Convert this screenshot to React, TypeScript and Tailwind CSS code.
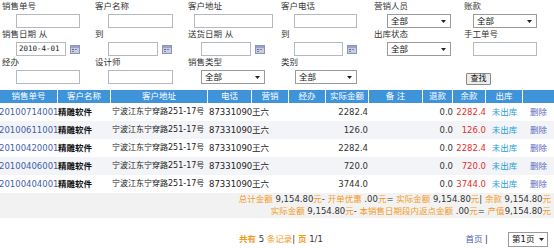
import React from "react";

const font = "font-['DejaVu_Sans','Noto_Sans_CJK_SC',sans-serif]";

const CalendarIcon = () => (
  <svg width="10" height="9" viewBox="0 0 10 9" className="ml-[4px]">
    <rect x="0.5" y="0.5" width="9" height="8" fill="#c9cde2" stroke="#8e94b4" />
    <rect x="1" y="1" width="8" height="2" fill="#9aa2c6" />
    <rect x="2" y="4" width="2" height="1" fill="#5a6290" />
    <rect x="5" y="4" width="2" height="1" fill="#7a82aa" />
    <rect x="2" y="6" width="2" height="1" fill="#7a82aa" />
  </svg>
);

const TextBox = ({ w, ml, value }: { w: string; ml: string; value?: string }) => (
  <div
    className={`${w} ${ml} h-[14px] border border-[#b4b8c0] bg-white pl-[2px] text-[7.5px] leading-[12px] text-[#222] font-['DejaVu_Sans_Mono',monospace]`}
  >
    {value}
  </div>
);

const DateBox = ({ w, ml, value }: { w: string; ml: string; value?: string }) => (
  <div className={`${ml} flex items-center`}>
    <div
      className={`${w} h-[14px] border border-[#b4b8c0] bg-white pl-[2px] text-[7.5px] leading-[12px] text-[#222] font-['DejaVu_Sans_Mono',monospace]`}
    >
      {value}
    </div>
    <CalendarIcon />
  </div>
);

const SelectBox = ({ w, ml, value }: { w: string; ml: string; value: string }) => (
  <div
    className={`${w} ${ml} h-[14px] border border-[#9a9a9a] bg-white flex items-center justify-between pl-[3px] pr-[4px] text-[8.5px] text-[#111]`}
  >
    <span>{value}</span>
    <svg width="5" height="3" viewBox="0 0 5 3">
      <path d="M0 0H5L2.5 3Z" fill="#222" />
    </svg>
  </div>
);

const Field = ({ label, children }: { label: string; children?: React.ReactNode }) => (
  <div className="flex flex-col">
    <div className="h-[14px] leading-[13px] text-[8.5px] text-[#333] whitespace-nowrap">{label}</div>
    <div className="h-[14px]">{children}</div>
  </div>
);

const cols =
  "grid grid-cols-[58px_53px_97px_44px_37px_37px_43px_54px_30px_33px_37px_31px]";

const headers = ["销售单号", "客户名称", "客户地址", "电话", "营销", "经办", "实际金额", "备 注", "退款", "余款", "出库", ""];

const rows = [
  { no: "20100714001", amt: "2282.4", rest: "2282.4" },
  { no: "20100611001", amt: "126.0", rest: "126.0" },
  { no: "20100420001", amt: "2282.4", rest: "2282.4" },
  { no: "20100406001", amt: "720.0", rest: "720.0" },
  { no: "20100404001", amt: "3744.0", rest: "3744.0" },
];

const O = ({ children }: { children: React.ReactNode }) => (
  <span className="text-[#f29b1d]">{children}</span>
);

export default function App() {
  return (
    <div className={`w-[554px] h-[248px] overflow-hidden bg-white text-[8.5px] text-[#333] ${font}`}>
      {/* search form */}
      <div className="grid grid-cols-[93px_93px_93px_93px_90px_90px] pl-[2px]">
        <Field label="销售单号"><TextBox w="w-[64px]" ml="ml-[14px]" /></Field>
        <Field label="客户名称"><TextBox w="w-[65px]" ml="ml-[13px]" /></Field>
        <Field label="客户地址"><TextBox w="w-[79px]" ml="ml-[6px]" /></Field>
        <Field label="客户电话"><TextBox w="w-[63px]" ml="ml-[13px]" /></Field>
        <Field label="营销人员"><SelectBox w="w-[64px]" ml="ml-[13px]" value="全部" /></Field>
        <Field label="账款"><SelectBox w="w-[64px]" ml="ml-[9px]" value="全部" /></Field>

        <Field label="销售日期 从"><DateBox w="w-[50px]" ml="ml-[14px]" value="2010-4-01" /></Field>
        <Field label="到"><DateBox w="w-[50px]" ml="ml-[13px]" /></Field>
        <Field label="送货日期 从"><DateBox w="w-[50px]" ml="ml-[13px]" /></Field>
        <Field label="到"><DateBox w="w-[49px]" ml="ml-[13px]" /></Field>
        <Field label="出库状态"><SelectBox w="w-[64px]" ml="ml-[13px]" value="全部" /></Field>
        <Field label="手工单号"><TextBox w="w-[64px]" ml="ml-[9px]" /></Field>

        <Field label="经办"><TextBox w="w-[64px]" ml="ml-[14px]" /></Field>
        <Field label="设计师"><TextBox w="w-[65px]" ml="ml-[13px]" /></Field>
        <Field label="销售类型"><SelectBox w="w-[64px]" ml="ml-[13px]" value="全部" /></Field>
        <Field label="类别"><SelectBox w="w-[62px]" ml="ml-[14px]" value="全部" /></Field>
        <Field label="" />
        <Field label="">
          <button className="ml-[2px] mt-[3px] h-[12px] w-[25px] border border-[#8a8a8a] bg-[#ececec] text-[8px] leading-[10px] text-[#111] rounded-[1px]">
            查找
          </button>
        </Field>
      </div>

      {/* list */}
      <div className="mt-[6px]">
        <div className={`${cols} h-[13px] bg-[#3e93d9] text-white`}>
          {headers.map((h, i) => (
            <div key={i} className="border-r border-white text-center leading-[13px] whitespace-nowrap last:border-r-0">
              {h}
            </div>
          ))}
        </div>
        {rows.map((r, i) => (
          <div key={r.no} className={`${cols} h-[18px] items-center ${i % 2 === 1 ? "bg-[#f3f4f7]" : "bg-white"}`}>
            <div className="-ml-[1px] whitespace-nowrap text-[#3f5fae]">{r.no}</div>
            <div className="whitespace-nowrap font-bold text-[#111]">精雕软件</div>
            <div className="pl-[1px] whitespace-nowrap text-[8px] text-[#222]">宁波江东宁穿路251-17号</div>
            <div className="pl-[1px] whitespace-nowrap text-[#222]">87331090</div>
            <div className="whitespace-nowrap text-[#222]">王六</div>
            <div />
            <div className="pr-[1px] text-right text-[#333]">{r.amt}</div>
            <div />
            <div className="text-right text-[#333]">0.0</div>
            <div className="text-right text-[#e0312f]">{r.rest}</div>
            <div className="text-center text-[#2a9ed8]">未出库</div>
            <div className="text-center text-[#5b6cc0]">删除</div>
          </div>
        ))}
      </div>

      {/* totals */}
      <div className="bg-[#f2f2f2] h-[25px] pr-[3px] text-right leading-[12px] text-[#333] whitespace-nowrap">
        <div>
          <O>总计金额</O> 9,154.80<O>元</O>- <O>开单优惠</O> .00<O>元</O>= <O>实际金额</O> 9,154.80<O>元</O>| <O>余款</O> 9,154.80<O>元</O>
        </div>
        <div>
          <O>实际金额</O> 9,154.80<O>元</O>- <O>本销售日期段内返点金额</O> .00<O>元</O>= <O>产值</O>9,154.80<O>元</O>
        </div>
      </div>

      {/* pager */}
      <div className="flex items-center h-[18px] mt-[12px] pl-[239px] pr-[6px] whitespace-nowrap">
        <span>
          <span className="font-bold text-[#f29b1d]">共有</span> 5 <span className="text-[#f29b1d]">条记录</span>| <span className="font-bold text-[#f29b1d]">页</span> 1/1
        </span>
        <span className="ml-auto">
          <span className="text-[#3f5fae]">首页</span> |
        </span>
        <div className="ml-[20px] flex h-[15px] w-[40px] items-center justify-between border border-[#9a9a9a] bg-white pl-[3px] pr-[3px] text-[8.5px] text-[#111]">
          <span>第1页</span>
          <svg width="5" height="3" viewBox="0 0 5 3">
            <path d="M0 0H5L2.5 3Z" fill="#222" />
          </svg>
        </div>
      </div>
    </div>
  );
}
